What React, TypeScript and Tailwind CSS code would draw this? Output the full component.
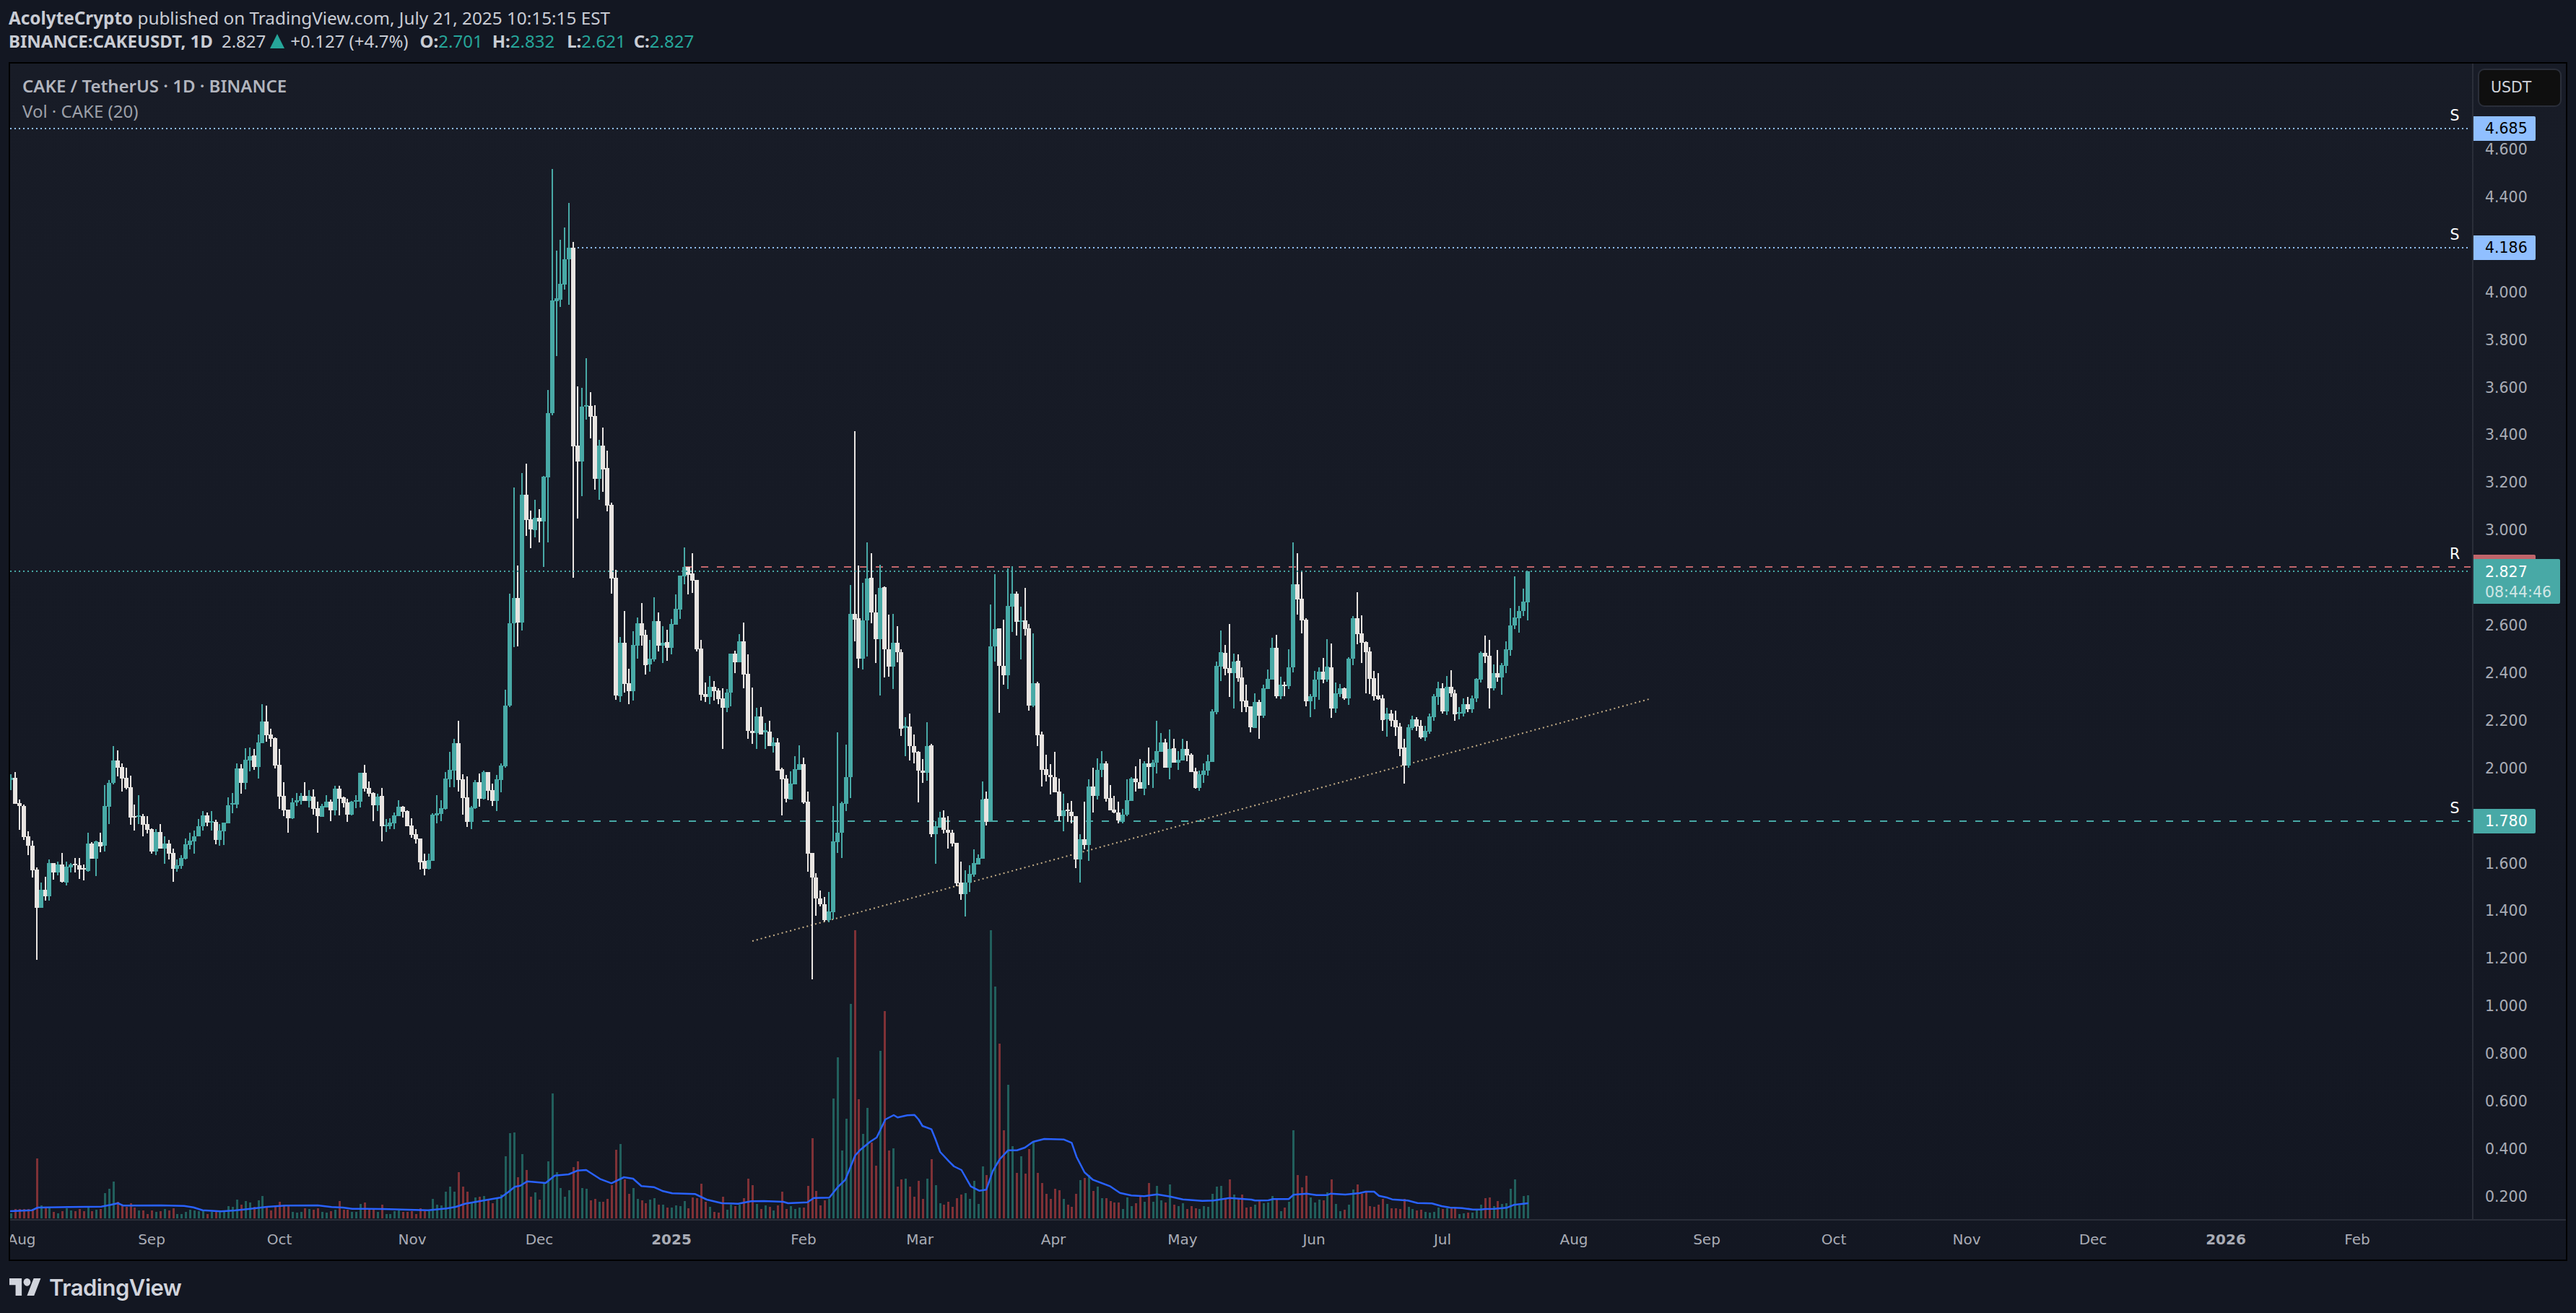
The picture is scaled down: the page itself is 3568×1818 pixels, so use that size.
// CAKEUSDT daily chart snapshot
type Candle = [number, number, number, number, number] // up, bodyTop, bodyBottom, high, low (page px)

// Aug - late Nov stretch, values relative to y=950 at 3 units per px
const early: Candle[] = ([
  [1,380,388,365,432],[0,380,488,357,488],[0,487,500,470,597],[0,498,627,491,638],[0,625,665,603,702],[0,663,765,642,795],[0,762,920,753,1136],[1,846,920,816,920],[0,846,873,792,891],[1,735,873,720,891],
  [0,735,774,735,804],[1,741,774,729,786],[0,741,813,693,816],[1,750,816,729,828],[1,741,752,735,774],[0,738,744,714,774],[0,744,762,714,800],[0,756,762,741,807],[1,654,768,609,771],[0,654,717,648,717],
  [1,645,717,642,789],[0,648,666,609,690],[1,498,663,411,687],[1,402,501,390,573],[1,309,402,249,408],[0,309,339,267,375],[0,336,384,321,438],[0,381,423,339,429],[0,420,546,372,576],[0,540,546,492,600],
  [1,537,543,453,573],[0,540,576,531,624],[0,573,597,540,612],[0,594,687,591,696],[1,606,687,594,702],[0,606,675,573,675],[1,654,675,624,738],[0,654,696,639,720],[0,693,759,675,813],[1,744,759,720,771],
  [1,714,747,702,759],[1,657,717,633,720],[1,642,660,609,678],[1,624,645,600,696],[1,582,624,552,624],[1,537,582,519,600],[0,537,567,525,582],[1,561,567,519,600],[0,564,639,555,657],[1,600,639,573,663],
  [1,567,603,567,660],[1,495,570,462,570],[1,486,492,444,528],[1,342,492,321,507],[0,342,402,324,447],[1,306,402,258,429],[1,291,309,255,354],[0,288,336,261,348],[1,234,336,201,384],[1,147,237,75,237],
  [0,147,204,81,231],[0,201,219,177,252],[0,216,330,213,342],[0,327,459,261,510],[0,456,516,399,540],[0,513,549,513,609],[1,483,549,465,552],[1,474,483,444,498],[1,456,477,444,492],[0,456,477,399,477],
  [1,456,477,432,504],[0,459,510,429,534],[0,507,540,480,609],[1,498,543,489,543],[1,480,504,453,504],[0,480,516,471,561],[1,426,516,414,537],[0,426,468,414,537],[0,462,486,459,504],[0,483,534,468,564],
  [1,480,534,477,537],[1,474,480,453,507],[1,360,480,360,504],[0,360,426,327,438],[0,423,447,396,459],[0,444,495,441,561],[1,459,495,447,519],[0,456,582,423,645],[1,576,582,552,606],[1,567,582,549,594],
  [1,537,570,525,594],[1,501,540,474,540],[0,501,522,498,546],[0,519,582,516,582],[0,579,618,549,630],[0,615,636,594,654],[0,633,732,633,762],[0,726,759,696,786],[1,723,759,696,762],[1,534,726,528,726],
  [1,528,537,453,570],[1,507,531,474,561],[1,384,510,357,513],[1,348,387,273,420],[1,237,351,219,420],[0,237,390,144,438],[0,387,465,366,534],[0,462,564,375,585],[1,504,564,498,594],[1,399,507,390,510],
  [0,399,468,363,501],[1,357,468,351,471],[0,357,435,357,474],[0,432,477,405,498],[1,387,477,369,519],[1,330,390,321,441],[1,81,333,15,339],
] as Candle[]).map(([u, t, b, h, l]) => [u, 950 + t / 3, 950 + b / 3, 950 + h / 3, 950 + l / 3] as Candle)

const later: Candle[] = [
  [1,863,977,822,979],[1,828,863,675,896],[0,828,862,783,895],[1,685,862,655,873],[0,685,720,642,742],[0,719,733,707,759],[1,717,734,692,744],[0,717,722,705,751],[1,660,722,659,785],[1,572,661,540,751],
  [1,416,572,234,575],[1,413,417,347,493],[1,393,415,332,425],[1,359,394,315,401],[1,343,359,281,422],[0,343,618,335,800],[0,617,639,535,718],[1,563,639,537,687],[1,561,563,496,581],[0,562,577,543,607],
  [0,576,663,561,678],[1,617,663,609,692],[0,617,650,592,681],[0,648,700,624,708],[0,699,801,696,822],[0,800,963,789,969],[1,890,964,882,972],[0,890,947,846,959],[0,946,957,926,975],[1,893,957,874,970],
  [1,863,894,855,912],[0,863,880,835,894],[0,879,921,872,934],[1,912,920,886,930],[1,860,913,827,916],[0,860,894,848,902],[1,890,894,867,918],[0,889,897,872,915],[1,864,897,857,906],[1,843,865,823,865],
  [1,797,844,797,857],[1,785,798,758,809],[0,785,796,785,823],[0,794,804,766,821],[0,803,899,803,902],[0,898,962,886,970],[0,961,965,945,972],[1,951,965,936,975],[0,951,957,943,970],[0,956,968,953,975],
  [0,967,980,953,1037],[1,959,980,954,986],[1,905,959,905,978],[0,905,917,901,932],[1,888,917,878,917],[0,888,934,862,953],[0,933,1012,906,1023],[0,1012,1015,952,1030],[1,992,1015,980,1037],[0,992,1017,979,1017],
  [1,1011,1014,1001,1037],[0,1013,1033,998,1033],[1,1028,1033,1021,1042],[0,1028,1067,1022,1067],[0,1065,1079,1063,1129],[0,1078,1106,1073,1111],[1,1085,1107,1068,1107],[1,1065,1086,1047,1086],[1,1058,1066,1032,1066],[0,1058,1111,1049,1113],
  [0,1110,1182,1096,1207],[0,1181,1215,1181,1356],[0,1215,1244,1209,1268],[0,1244,1252,1233,1255],[0,1252,1274,1242,1276],[1,1262,1274,1235,1277],[1,1165,1263,1116,1273],[1,1153,1166,1014,1181],[1,1112,1153,1110,1188],[1,1076,1113,1031,1123],
  [1,850,1076,810,1105],[0,850,858,597,888],[0,856,912,783,925],[1,859,912,807,927],[1,801,859,751,909],[0,800,848,766,863],[0,848,885,823,918],[1,814,885,782,963],[0,813,899,812,938],[0,899,923,851,937],
  [1,890,923,850,954],[0,890,903,867,917],[0,903,1009,899,1019],[1,1005,1008,993,1047],[0,1006,1033,988,1053],[0,1033,1042,1017,1057],[0,1041,1067,1040,1111],[0,1067,1070,1051,1084],[1,1033,1070,1000,1081],[0,1032,1155,1030,1159],
  [1,1144,1155,1137,1196],[1,1132,1146,1124,1146],[0,1132,1149,1122,1154],[0,1149,1153,1130,1175],[0,1153,1168,1149,1172],[0,1167,1223,1167,1227],[0,1222,1238,1193,1246],[1,1222,1238,1205,1269],[1,1210,1222,1198,1235],[1,1195,1211,1176,1214],
  [1,1188,1197,1183,1197],[1,1107,1189,1082,1189],[0,1106,1138,1096,1143],[1,895,1138,837,1138],[1,871,895,795,916],[0,870,922,870,987],[0,922,935,858,948],[1,839,935,787,954],[1,822,840,784,875],[0,822,861,819,880],
  [1,859,861,840,913],[0,859,871,814,880],[0,870,977,864,984],[1,946,977,877,979],[0,946,1018,944,1033],[0,1017,1066,1013,1089],[0,1065,1073,1045,1082],[0,1073,1076,1058,1100],[0,1076,1097,1041,1097],[0,1096,1130,1078,1137],
  [1,1122,1130,1099,1151],[0,1121,1122,1112,1138],[0,1124,1130,1109,1140],[0,1130,1190,1130,1202],[1,1162,1190,1155,1222],[0,1162,1170,1110,1176],[1,1089,1170,1079,1192],[0,1089,1102,1063,1125],[1,1066,1102,1050,1107],[1,1057,1066,1040,1076],
  [0,1057,1106,1054,1110],[0,1105,1122,1087,1122],[0,1121,1125,1102,1126],[0,1125,1136,1110,1140],[1,1128,1137,1120,1140],[1,1108,1128,1079,1130],[1,1078,1109,1076,1109],[0,1078,1083,1061,1096],[0,1083,1092,1051,1092],[1,1057,1092,1054,1101],
  [0,1057,1062,1035,1087],[1,1056,1062,1052,1091],[1,1040,1056,998,1071],[1,1028,1041,1015,1041],[0,1028,1063,1023,1063],[1,1037,1063,1010,1079],[0,1036,1056,1023,1056],[1,1052,1056,1040,1066],[1,1037,1053,1023,1053],[0,1037,1046,1026,1054],
  [0,1045,1069,1043,1069],[0,1068,1091,1063,1092],[1,1072,1091,1067,1095],[1,1067,1073,1057,1084],[1,1054,1067,1045,1074],[1,985,1055,982,1055],[1,922,986,916,989],[1,903,923,873,943],[0,904,926,893,935],[0,925,932,864,965],
  [1,916,932,905,981],[0,915,939,906,944],[0,938,971,924,986],[0,970,979,948,986],[0,978,1007,978,1014],[1,972,1008,960,1008],[0,972,991,969,1023],[1,953,991,948,994],[1,940,954,927,954],[1,897,941,883,941],
  [0,897,964,879,967],[1,948,964,937,968],[0,948,949,944,964],[1,924,950,899,954],[1,809,924,751,931],[0,809,830,766,851],[0,829,859,792,877],[0,858,971,856,978],[1,964,971,961,993],[1,941,965,929,982],
  [1,930,941,924,969],[0,930,941,911,946],[1,923,941,885,944],[0,924,981,891,994],[1,960,981,945,987],[1,953,961,947,965],[0,953,967,952,969],[1,912,967,910,976],[1,856,912,853,921],[0,856,878,820,892],
  [0,877,890,852,918],[0,889,903,888,960],[0,902,940,896,961],[0,939,964,929,970],[0,963,968,932,969],[0,967,997,962,1012],[1,988,996,980,1020],[0,988,998,983,1006],[0,997,1007,984,1019],[0,1006,1037,1001,1047],
  [0,1035,1060,1023,1085],[1,1007,1060,1003,1063],[1,996,1008,991,1011],[0,996,1006,993,1012],[0,1005,1021,997,1023],[1,1012,1021,1005,1026],[1,992,1013,988,1016],[1,964,993,961,998],[1,953,965,944,976],[0,953,985,946,988],
  [1,951,985,936,990],[0,951,960,928,965],[0,960,989,955,998],[1,986,988,979,996],[1,975,988,967,992],[0,975,982,965,986],[1,967,982,963,987],[1,940,967,939,972],[1,904,941,902,945],[0,904,909,880,918],
  [0,908,953,886,981],[1,932,953,920,956],[0,932,938,900,944],[1,921,938,918,962],[1,899,922,888,932],[1,866,900,842,908],[1,855,866,798,871],[1,846,856,839,876],[1,833,846,815,853],[1,791,834,791,859],
]

const candles = [...early, ...later]

// pixel heights of the volume columns, one per candle
const volumes = [
  7,13,13,13,13,13,83,18,14,14,9,7,10,14,11,10,13,10,16,10,12,13,35,41,51,23,18,16,21,15,11,11,6,11,9,10,13,11,14,6,6,9,12,11,10,10,6,9,10,9,9,17,16,26,19,24,22,16,25,31,17,11,16,23,19,18,9,8,9,14,13,12,14,9,8,10,12,24,12,12,9,9,20,22,13,13,9,19,6,6,10,11,9,9,10,6,
  14,10,10,27,19,18,37,44,37,64,44,37,22,29,30,31,26,21,27,33,86,118,119,57,89,67,30,36,26,50,79,173,64,42,30,39,71,79,42,41,25,27,23,23,27,46,95,103,54,34,42,27,25,21,26,28,19,19,15,15,18,17,24,14,29,28,48,23,16,9,8,30,12,19,17,19,28,
  55,46,20,13,18,16,11,18,37,13,17,13,15,15,45,111,38,18,25,27,166,223,94,138,297,399,165,117,153,105,73,232,287,94,97,44,54,55,44,30,52,27,55,82,46,21,19,23,16,28,33,35,27,52,20,72,60,399,321,242,122,185,100,63,86,62,96,107,63,49,34,27,41,39,27,19,16,34,53,56,60,38,44,28,28,24,22,22,13,29,17,21,32,23,49,23,45,25,22,47,19,17,21,13,17,14,13,17,16,34,44,45,27,
  54,33,27,33,15,16,19,25,21,22,31,27,10,15,23,122,60,43,59,29,22,26,25,36,54,20,10,12,19,40,47,34,37,17,16,19,27,20,14,14,13,27,16,13,11,12,9,8,9,15,13,14,15,14,6,7,8,8,12,19,28,29,17,24,20,21,41,54,18,31,32,
]

const maLeft = [[22,231],[70,227],[82,216],[150,214],[220,212],[240,205],[256,198],[268,208],[350,207],[400,209],[420,215],[440,227],[480,232],[510,228],[540,222],[580,213],[620,208],[690,207],[720,214],[745,216],[765,221],[830,222],[930,227],[970,220],[990,213],[1010,200],[1050,187],[1088,174],[1105,150],[1118,130],[1130,125],[1145,107],[1185,114],[1205,83],[1235,78],[1255,62],[1273,60],[1303,97],[1328,115],[1355,90],[1375,96],[1393,127],[1420,131],[1440,148],[1460,157],[1510,160],[1535,183],[1568,198]].map(([u, v]) => `${(u / 1.568).toFixed(1)},${(1600 + v / 3).toFixed(1)}`)
const maMid = [[50,1250],[90,1240],[130,1239],[190,1242],[205,1248],[265,1244],[285,1226],[333,1225],[360,1180],[383,1150],[413,1050],[430,1025],[460,992],[480,975],[507,900],[533,882],[545,892],[575,883],[597,881],[610,900],[622,927],[650,941],[662,980],[677,1035],[705,1075],[720,1095],[743,1110],[772,1178],[798,1196],[820,1192],[840,1115],[862,1065],[888,1028],[915,1028],[940,1017],[965,993],[1000,981],[1060,983],[1085,997],[1100,1055],[1125,1120],[1150,1150],[1205,1178],[1235,1205],[1270,1216],[1310,1219],[1350,1211],[1390,1220],[1430,1232],[1490,1238],[1525,1237]].map(([u, v]) => `${(1000 + u / 2.24).toFixed(1)},${(1250 + v / 3).toFixed(1)}`)
const maRight = [[40,356],[130,363],[145,367],[200,366],[220,361],[285,361],[305,343],[360,338],[400,344],[445,344],[460,338],[520,342],[580,336],[605,330],[640,330],[660,347],[695,355],[715,362],[780,367],[820,377],[880,379],[920,390],[955,396],[1005,398],[1050,404],[1085,404],[1100,402],[1140,401],[1190,397],[1220,385],[1280,378]].map(([u, v]) => `${(1690 + u / 3).toFixed(1)},${(1540 + v / 3).toFixed(1)}`)
const maPoints = [...maLeft, ...maMid, ...maRight].join(' ')

const TEAL = '#48a9a6'
const WHITE = '#e8e4e1'
const candleX = (i: number) => Math.round(15.3 + 5.9 * i)

const priceTicks = ['4.600','4.400','4.000','3.800','3.600','3.400','3.200','3.000','2.600','2.400','2.200','2.000','1.600','1.400','1.200','1.000','0.800','0.600','0.400','0.200']

const timeTicks: [string, number, boolean?][] = [
  ['Aug',30],['Sep',210],['Oct',387],['Nov',571],['Dec',747],['2025',930,true],['Feb',1113],['Mar',1274],['Apr',1459],['May',1638],
  ['Jun',1820],['Jul',1998],['Aug',2180],['Sep',2364],['Oct',2540],['Nov',2724],['Dec',2899],['2026',3083,true],['Feb',3265],
]

function Plot() {
  return (
    <svg className="absolute left-0 top-0" width={3408} height={1600} viewBox="14 88 3408 1600">
      <g shapeRendering="crispEdges" strokeWidth={2}>
        <line x1={14} y1={178} x2={3422} y2={178} stroke="#90bfff" strokeDasharray="2 4" />
        <line x1={800} y1={343} x2={3422} y2={343} stroke="#90bfff" strokeDasharray="2 4" />
        <line x1={949} y1={785} x2={3422} y2={785} stroke="#c2666c" strokeDasharray="10 12" />
        <line x1={646} y1={1137} x2={3422} y2={1137} stroke={TEAL} strokeDasharray="10 12" />
      </g>
      <line x1={1042} y1={1303} x2={2284} y2={968} stroke="#c4ad86" strokeWidth={2} strokeDasharray="2 4" />
      <g shapeRendering="crispEdges">
        {volumes.map((h, i) => (
          <rect key={i} x={candleX(i) - 1} y={1687 - h} width={3} height={h} fill={candles[i]?.[0] ? '#215f5c' : '#7f3136'} />
        ))}
      </g>
      <polyline points={maPoints} fill="none" stroke="#2962ff" strokeWidth={2.5} strokeLinejoin="round" />
      <g shapeRendering="crispEdges">
        {candles.map(([up, top, bottom, high, low], i) => {
          const x = candleX(i)
          const fill = up ? TEAL : WHITE
          return (
            <g key={i} fill={fill}>
              <rect x={x - 1} y={Math.round(high)} width={2} height={Math.max(1, Math.round(low - high))} />
              <rect x={x - 3} y={Math.round(top)} width={6} height={Math.max(2, Math.round(bottom - top))} />
            </g>
          )
        })}
      </g>
      <line x1={14} y1={791} x2={3422} y2={791} stroke={TEAL} strokeWidth={2} strokeDasharray="2 4" shapeRendering="crispEdges" />
    </svg>
  )
}

function LevelTag({ top, text, dark }: { top: number; text: string; dark?: boolean }) {
  return (
    <div
      className={`absolute left-0 w-[86px] h-[34px] rounded-r-[2px] pl-4 flex items-center ${dark ? 'bg-[#90bfff] text-black' : 'bg-[#48a9a6] text-white'}`}
      style={{ top }}
    >
      {text}
    </div>
  )
}

function PriceAxis() {
  return (
    <div className="relative w-[130px] shrink-0 border-l-2 border-[#2a2e39] font-['DejaVu_Sans',sans-serif] text-[20.5px] leading-none">
      <div className="absolute left-[6px] top-[7px] w-[116px] h-[53px] rounded-[9px] border-2 border-[#2a2e39] bg-[#0f0f0f] text-[#d1d4dc] flex items-center pl-[16px]">USDT</div>
      {priceTicks.map((p) => (
        <div key={p} className="absolute left-4 -translate-y-1/2 text-[#a9acb5]" style={{ top: 207 + (4.6 - parseFloat(p)) * 329.5 - 88 }}>
          {p}
        </div>
      ))}
      <LevelTag top={73} text="4.685" dark />
      <LevelTag top={238} text="4.186" dark />
      <div className="absolute left-0 top-[680px] w-[86px] h-[20px] rounded-tr-[2px] bg-[#c0656b]" />
      <div className="absolute left-0 top-[686px] w-[120px] h-[62px] rounded-r-[2px] bg-[#48a9a6] pl-4 flex flex-col justify-center gap-[8px] pt-[2px]">
        <span className="text-white">2.827</span>
        <span className="text-[#cfe6e5]">08:44:46</span>
      </div>
      <LevelTag top={1032} text="1.780" />
    </div>
  )
}

export default function App() {
  return (
    <div className="w-[3568px] h-[1818px] bg-[#131722] flex flex-col font-['Noto_Sans',sans-serif] text-[24px] overflow-hidden">
      <div className="h-[86px] pl-3 pt-[9px] shrink-0 leading-[32px] text-[#c9ccd4]">
        <div className="whitespace-nowrap text-[24.3px]">
          <span className="font-bold">AcolyteCrypto</span> published on TradingView.com, July 21, 2025 10:15:15 EST
        </div>
        <div className="flex items-center whitespace-nowrap">
          <span className="font-bold">BINANCE:CAKEUSDT, 1D</span>
          <span className="ml-[12px]">2.827</span>
          <svg className="ml-[6px]" width={20} height={20} viewBox="0 0 20 20"><path d="M10 0 L20 20 L0 20 Z" fill="#26a69a" /></svg>
          <span className="ml-[8px]">+0.127 (+4.7%)</span>
          <span className="ml-[16px] font-bold">O:</span><span className="text-[#26a69a]">2.701</span>
          <span className="ml-[13px] font-bold">H:</span><span className="text-[#26a69a]">2.832</span>
          <span className="ml-[17px] font-bold">L:</span><span className="text-[#26a69a]">2.621</span>
          <span className="ml-[11px] font-bold">C:</span><span className="text-[#26a69a]">2.827</span>
        </div>
      </div>

      <div className="ml-3 w-[3544px] h-[1660px] shrink-0 border-2 border-black bg-linear-to-b from-[#181c27] to-[#131722] flex flex-col">
        <div className="flex h-[1600px] shrink-0">
          <div className="relative flex-1 overflow-hidden">
            <Plot />
            <div className="absolute left-[17px] top-[17px] font-semibold text-[#b2b5be] leading-[28px] whitespace-nowrap">CAKE / TetherUS · 1D · BINANCE</div>
            <div className="absolute left-[17px] top-[52px] text-[#9da0a9] leading-[28px] whitespace-nowrap">Vol · CAKE (20)</div>
            {[[70, 'S'], [235, 'S'], [677, 'R'], [1029, 'S']].map(([y, t], i) => (
              <div key={i} className="absolute left-[3379px] w-[14px] text-center text-white leading-none font-['DejaVu_Sans',sans-serif] text-[20.5px]" style={{ top: y as number - 8 }}>{t}</div>
            ))}
          </div>
          <PriceAxis />
        </div>
        <div className="relative flex-1 border-t-2 border-[#2a2e39] overflow-hidden font-['DejaVu_Sans',sans-serif] text-[20px] text-[#a9acb5]">
          {timeTicks.map(([label, x, strong]) => (
            <div key={label + x} className={`absolute top-[16px] -translate-x-1/2 leading-none ${strong ? 'font-bold' : ''}`} style={{ left: x - 14 }}>
              {label}
            </div>
          ))}
        </div>
      </div>

      <div className="flex-1 flex items-center pl-[13px] gap-[11px]">
        <svg width={44} height={24} viewBox="0 4 36 18" preserveAspectRatio="none" fill="#d1d4dc">
          <path d="M14 22H7V11H0V4h14v18zM28 22h-8l7.5-18h8L28 22z" />
          <circle cx={20} cy={8} r={4} />
        </svg>
        <span className="font-['Inter',sans-serif] font-semibold text-[31px] leading-none text-[#d1d4dc] tracking-[-0.5px]">TradingView</span>
      </div>
    </div>
  )
}
